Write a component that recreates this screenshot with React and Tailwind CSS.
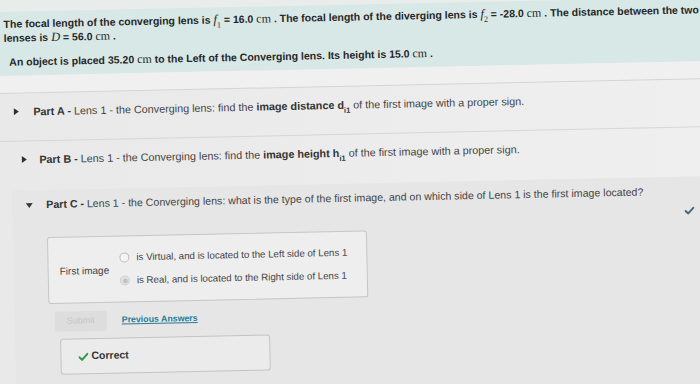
import React from "react";

const Math1 = ({ v, sub }) => (
  <span className="font-['Liberation_Serif',serif] italic font-normal text-[12.5px] leading-[14px]">
    {v}
    {sub && <sub className="not-italic text-[8px] leading-none align-[-2px]">{sub}</sub>}
  </span>
);
const Unit = ({ children }) => (
  <span className="font-['Liberation_Serif',serif] font-normal text-[12px] leading-[14px]">{children}</span>
);

const RightTri = () => (
  <svg width="6" height="8" viewBox="0 0 6 8" className="shrink-0">
    <path d="M0.5 0.5 L5.5 4 L0.5 7.5 Z" fill="#2f2f2f" />
  </svg>
);
const DownTri = () => (
  <svg width="8" height="6" viewBox="0 0 8 6" className="shrink-0">
    <path d="M0.5 0.8 L7.5 0.8 L4 5.5 Z" fill="#3a3a3a" />
  </svg>
);
const Check = ({ color, w = 11, h = 9 }) => (
  <svg width={w} height={h} viewBox="0 0 12 10" className="shrink-0">
    <path d="M1 5.4 L4.3 8.6 L11 1.4" fill="none" stroke={color} strokeWidth="2.4" strokeLinecap="round" strokeLinejoin="round" />
  </svg>
);

export default function App() {
  return (
    <div className="w-[700px] h-[384px] overflow-hidden bg-gradient-to-r from-[#e9e9e9] to-[#efefef] font-['Liberation_Sans',Arial,sans-serif] text-[#333]">
      <div className="w-[740px] h-[420px] -rotate-[1.2deg] origin-[0px_192px] flex flex-col">
        <div className="h-[12px] shrink-0 bg-[#e8eceb]" />
        <div className="h-[64px] shrink-0 bg-[#d8e8e6] pt-[6px] pl-[7px] text-[10.5px] font-bold text-[#262626]">
          <div className="h-[14px] flex items-center whitespace-nowrap">
            <span>
              The focal length of the converging lens is <Math1 v="f" sub="1" /> = 16.0 <Unit>cm</Unit> . The focal length of the diverging lens is <Math1 v="f" sub="2" /> = -28.0 <Unit>cm</Unit> . The distance between the two
            </span>
          </div>
          <div className="h-[14px] flex items-center whitespace-nowrap">
            <span>
              lenses is <Math1 v="D" /> = 56.0 <Unit>cm</Unit> .
            </span>
          </div>
          <div className="h-[14px] mt-[10px] pl-[5px] flex items-center whitespace-nowrap">
            <span>
              An object is placed 35.20 <Unit>cm</Unit> to the Left of the Converging lens. Its height is 15.0 <Unit>cm</Unit> .
            </span>
          </div>
        </div>
        <div className="h-[18px] shrink-0 bg-[#f0f0f0] border-b border-[#d4d4d4]" />
        <div className="h-[48px] shrink-0 pt-[11px] border-b border-[#d6d6d6] pl-[15px] text-[10.8px] text-[#444]">
          <div className="h-[14px] flex items-center whitespace-nowrap">
            <RightTri />
            <span className="ml-[14px]">
              <b className="text-[#333]">Part A - </b>Lens 1 - the Converging lens: find the <b className="text-[#333]">image distance d<sub className="text-[7.5px] leading-none align-[-2px]">i1</sub></b> of the first image with a proper sign.
            </span>
          </div>
        </div>
        <div className="h-[49px] shrink-0 pt-[11px] pl-[22px] text-[10.8px] text-[#444]">
          <div className="h-[14px] flex items-center whitespace-nowrap">
            <RightTri />
            <span className="ml-[12px]">
              <b className="text-[#333]">Part B - </b>Lens 1 - the Converging lens: find the <b className="text-[#333]">image height h<sub className="text-[7.5px] leading-none align-[-2px]">i1</sub></b> of the first image with a proper sign.
            </span>
          </div>
        </div>
        <div className="flex-1 ml-[12px] bg-[#e6e6e6] pt-[8px]">
          <div className="h-[14px] flex items-center whitespace-nowrap pl-[13px] text-[10.6px] text-[#444]">
            <DownTri />
            <span className="ml-[13px]">
              <b className="text-[#333]">Part C - </b>Lens 1 - the Converging lens: what is the type of the first image, and on which side of Lens 1 is the first image located?
            </span>
          </div>
          <div className="w-[682px] h-[12px] mt-[6px] flex justify-end items-center">
            <Check color="#3d6a80" w={10} h={8} />
          </div>
          <div className="mt-[7px] ml-[34px] w-[320px] h-[67px] border border-[#c6c6c6] rounded-[3px] bg-[#eeeeee] flex items-center pl-[11px] text-[9.7px] text-[#444]">
            <div className="w-[60px] pt-[2px] text-[10px]">First image</div>
            <div className="flex flex-col gap-[5px]">
              <div className="flex items-center h-[18px]">
                <span className="w-[10px] h-[10px] rounded-full border border-[#bcbcbc] bg-[#f4f4f4]" />
                <span className="ml-[7px]">is Virtual, and is located to the Left side of Lens 1</span>
              </div>
              <div className="flex items-center h-[18px]">
                <span className="w-[10px] h-[10px] rounded-full border border-[#d0d0d0] bg-[#e2e2e2] flex items-center justify-center">
                  <span className="w-[5px] h-[5px] rounded-full bg-[#c4c4c4]" />
                </span>
                <span className="ml-[7px]">is Real, and is located to the Right side of Lens 1</span>
              </div>
            </div>
          </div>
          <div className="mt-[8px] ml-[40px] h-[20px] flex items-center">
            <div className="w-[52px] h-[20px] bg-[#dddddd] rounded-[2px] flex items-center justify-center text-[9px] text-[#c6c6c6]">
              Submit
            </div>
            <span className="ml-[15px] text-[8.8px] font-bold text-[#2b7c95] underline">Previous Answers</span>
          </div>
          <div className="mt-[7px] ml-[45px] w-[210px] h-[36px] border border-[#c4c4c4] rounded-[3px] bg-[#ebebeb] flex items-center pl-[17px]">
            <Check color="#2f9a4c" w={10} h={9} />
            <span className="ml-[3px] text-[10.5px] font-bold text-[#333]">Correct</span>
          </div>
        </div>
      </div>
    </div>
  );
}
